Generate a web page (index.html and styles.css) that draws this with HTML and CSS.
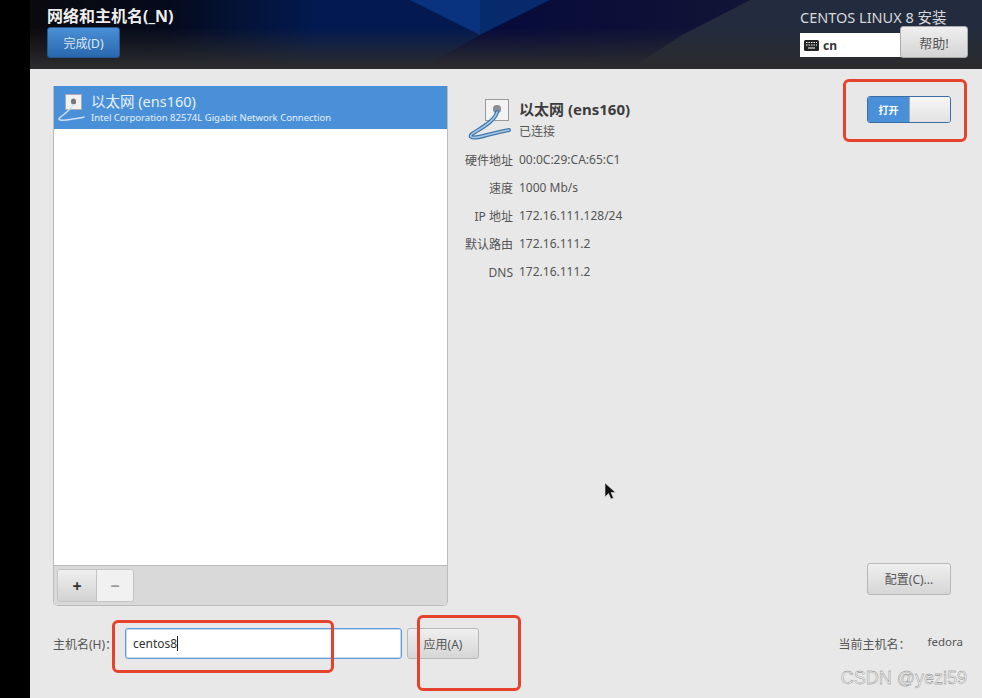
FILE: index.html
```html
<!DOCTYPE html>
<html lang="zh-CN">
<head>
    <meta name="viewport" content="width=device-width, initial-scale=1.0">
    <title>网络和主机名</title>
    <link rel="stylesheet" href="styles.css">
</head>
<body>
    <div class="screen">
        <div class="side-strip"></div>
        <div class="main">
            <header class="top-bar">
                <svg class="top-art" width="952" height="69" viewBox="30 0 952 69" preserveAspectRatio="none">
                    <defs>
                        <linearGradient id="baseFade" x1="0" x2="1" y1="0" y2="0">
                            <stop offset="0" stop-color="#0a0a0e"/>
                            <stop offset="0.14" stop-color="#050a1c"/>
                            <stop offset="0.3" stop-color="#021a50"/>
                            <stop offset="1" stop-color="#021a50"/>
                        </linearGradient>
                        <linearGradient id="darkFade" x1="0" x2="1" y1="0" y2="0">
                            <stop offset="0" stop-color="#03083c"/>
                            <stop offset="1" stop-color="#1a1d30"/>
                        </linearGradient>
                        <linearGradient id="bottomFade" x1="0" x2="0" y1="0" y2="1">
                            <stop offset="0.4" stop-color="#2b2b2d" stop-opacity="0"/>
                            <stop offset="0.96" stop-color="#2b2b2d"/>
                        </linearGradient>
                    </defs>
                    <rect x="30" y="0" width="952" height="69" fill="url(#baseFade)"/>
                    <polygon points="410,0 480,35 480,0" fill="#09327f"/>
                    <polygon points="480,0 480,35 550,0" fill="#072a6c"/>
                    <polygon points="550,0 480,35 420,69 982,69 982,0" fill="url(#darkFade)"/>
                    <polygon points="750,0 682,35 630,69 982,69 982,0" fill="#222c3e"/>
                    <rect x="30" y="0" width="952" height="69" fill="url(#bottomFade)"/>
                </svg>
                <div class="top-left">
                    <h1>网络和主机名(_N)</h1>
                    <button class="done-btn">完成(D)</button>
                </div>
                <div class="top-right">
                    <div class="product">CENTOS LINUX 8 安装</div>
                    <div class="top-controls">
                        <div class="keyboard">
                            <svg class="kb-icon" width="15" height="11" viewBox="0 0 15 11">
                                <rect width="15" height="11" rx="1.5" fill="#222"/>
                                <path d="M2 2.5h1.5M4.5 2.5H6M7 2.5h1.5M9.500 2.500H11M12 2.500h1M2 5h1.500M4.500 5H6M7 5h1.500M9.500 5H11M12 5h1M4 8h7" stroke="#fff" stroke-width="1.200"/>
                            </svg>
                            <span>cn</span>
                        </div>
                        <button class="help-btn">帮助!</button>
                    </div>
                </div>
            </header>
            <div class="content">
                <div class="columns">
                    <div class="list-col">
                        <div class="device-panel">
                            <div class="device-list">
                                <div class="device-row">
                                    <svg class="row-icon" width="28" height="30" viewBox="0 0 28 30">
                                        <rect x="8.500" y="1.500" width="16" height="15" fill="#f1f1f1" stroke="#aab" stroke-width="1"/>
                                        <rect x="14" y="5.500" width="5" height="6" rx="2.500" fill="#777"/>
                                        <path d="M16.500 11C14 17 8 20 2.500 25 0 28 8 27.500 13 26.500 18 25.500 24 25 27.500 24" fill="none" stroke="#cfe0f3" stroke-width="1.500"/>
                                    </svg>
                                    <div class="row-text">
                                        <div class="row-title">以太网 (ens160)</div>
                                        <div class="row-sub">Intel Corporation 82574L Gigabit Network Connection</div>
                                    </div>
                                </div>
                            </div>
                            <div class="list-toolbar">
                                <div class="add-remove">
                                    <span class="tool-btn add">+</span>
                                    <span class="tool-btn remove">−</span>
                                </div>
                            </div>
                        </div>
                    </div>
                    <div class="detail-col">
                        <div class="detail-head">
                            <svg class="detail-icon" width="48" height="44" viewBox="0 0 48 44">
                                <rect x="18.500" y="1.500" width="23" height="21" fill="#f3f3f3" stroke="#9a9a9a"/>
                                <rect x="26" y="7" width="8" height="8" rx="3.500" fill="#8a8f96"/>
                                <path d="M30 14C28 23 14 30 5 36 0 41 10 40 20 37 28 35 36 33 42 32" fill="none" stroke="#3f78ad" stroke-width="4" stroke-linecap="round"/>
                                <path d="M30 14C28 23 14 30 5 36 0 41 10 40 20 37 28 35 36 33 42 32" fill="none" stroke="#a9c8e6" stroke-width="1.500" stroke-linecap="round"/>
                            </svg>
                            <div>
                                <div class="detail-title">以太网 (ens160)</div>
                                <div class="detail-status">已连接</div>
                            </div>
                        </div>
                        <dl class="detail-table">
                            <dt>硬件地址</dt><dd>00:0C:29:CA:65:C1</dd>
                            <dt>速度</dt><dd>1000 Mb/s</dd>
                            <dt>IP 地址</dt><dd>172.16.111.128/24</dd>
                            <dt>默认路由</dt><dd>172.16.111.2</dd>
                            <dt>DNS</dt><dd>172.16.111.2</dd>
                        </dl>
                    </div>
                    <div class="action-col">
                        <div class="switch">
                            <span class="switch-on">打开</span>
                            <span class="switch-knob"></span>
                        </div>
                        <button class="gray-btn config-btn">配置(C)...</button>
                    </div>
                </div>
                <div class="host-row">
                    <label class="host-label">主机名(H)：</label>
                    <div class="host-input">centos8<span class="caret"></span></div>
                    <button class="gray-btn apply-btn">应用(A)</button>
                    <div class="current-host">
                        <span>当前主机名：</span>
                        <span class="host-value">fedora</span>
                    </div>
                </div>
            </div>
        </div>
    </div>

    <!-- annotations drawn on the screenshot -->
    <div class="mark mark-switch"></div>
    <div class="mark mark-input"></div>
    <div class="mark mark-apply"></div>
    <svg class="cursor" width="13" height="19" viewBox="0 0 13 19">
        <path d="M1 1v14l3.500-3.500 2.500 5.500 2.500-1-2.500-5.500h4.500z" fill="#111" stroke="#ddd" stroke-width=".6"/>
    </svg>
    <div class="watermark">CSDN @yezi59</div>
</body>
</html>
```

FILE: styles.css
```css
* {
    box-sizing: border-box;
}
body {
    margin: 0;
    width: 982px;
    height: 698px;
    overflow: hidden;
    position: relative;
    font-family: "Noto Sans", "Noto Sans CJK SC", sans-serif;
    font-size: 12px;
    color: #555;
    background: #e8e8e8;
}
button {
    font-family: inherit;
    margin: 0;
}
.screen {
    display: flex;
    height: 698px;
}
.side-strip {
    width: 30px;
    background: #000;
}
.main {
    flex: 1;
    display: flex;
    flex-direction: column;
    min-width: 0;
}

/* header */
.top-bar {
    height: 69px;
    position: relative;
    display: flex;
    justify-content: space-between;
    padding: 0 14px 0 17px;
    background: #2b2b2d;
    border-bottom: 1px solid #666;
}
.top-art {
    position: absolute;
    left: 0;
    top: 0;
}
.top-left,
.top-right {
    position: relative;
}
.top-left h1 {
    margin: 6px 0 0;
    font-size: 16px;
    line-height: 20px;
    font-weight: bold;
    color: #eee;
}
.done-btn {
    display: block;
    margin-top: 1px;
    width: 73px;
    height: 31px;
    font-size: 12px;
    color: #dfe8f3;
    border: 1px solid #24558c;
    border-radius: 3px;
    background: linear-gradient(180deg, #4a8fd6, #2a68ae);
}
.top-right {
    width: 168px;
}
.product {
    margin-top: 8px;
    font-size: 14.500px;
    line-height: 18px;
    white-space: nowrap;
    color: #d8d8d8;
}
.top-controls {
    display: flex;
    align-items: flex-start;
}
.keyboard {
    width: 101px;
    height: 24px;
    margin-top: 7px;
    margin-right: -1px;
    padding-left: 4px;
    display: flex;
    align-items: center;
    gap: 4px;
    background: #fff;
    font-size: 12px;
    font-weight: bold;
    color: #333;
}
.help-btn {
    width: 68px;
    height: 32px;
    font-size: 13px;
    color: #555;
    border: 1px solid #aaa;
    border-radius: 3px;
    background: linear-gradient(180deg, #efefef, #d4d4d4);
}

/* content */
.content {
    flex: 1;
    display: flex;
    flex-direction: column;
    padding: 17px 31px 0 23px;
}
.columns {
    display: flex;
    height: 520px;
}
.list-col {
    width: 395px;
}
.device-panel {
    height: 100%;
    display: flex;
    flex-direction: column;
    border: 1px solid #bbb;
    border-top: 0;
    border-radius: 0 0 5px 5px;
    background: #fff;
    overflow: hidden;
}
.device-list {
    flex: 1;
}
.device-row {
    height: 43px;
    display: flex;
    gap: 6px;
    align-items: center;
    padding: 0 0 0 3px;
    background: #4a90d9;
    color: #e6f0fa;
}
.row-title {
    font-size: 14.500px;
    line-height: 19px;
}
.row-sub {
    margin-top: 1px;
    font-size: 9.500px;
    line-height: 12px;
}
.list-toolbar {
    height: 40px;
    padding: 3px 3px;
    background: #d9d9d9;
    border-top: 1px solid #bbb;
}
.add-remove {
    display: flex;
    width: 77px;
    height: 33px;
    border: 1px solid #c4c4c4;
    border-radius: 3px;
    overflow: hidden;
}
.tool-btn {
    flex: 1;
    display: flex;
    align-items: center;
    justify-content: center;
    font-size: 16px;
    font-weight: bold;
}
.add {
    flex: 0 0 39px;
    color: #333;
    background: linear-gradient(180deg, #efefef, #d2d2d2);
    border-right: 1px solid #c4c4c4;
}
.remove {
    color: #999;
    background: #f1f1f1;
}

/* details */
.detail-col {
    width: 310px;
    padding: 12px 0 0 23px;
}
.detail-head {
    display: flex;
    gap: 4px;
    margin-left: -4px;
}
.detail-title {
    margin-top: 1px;
    font-size: 15px;
    line-height: 20px;
    font-weight: bold;
    color: #3c3c3c;
}
.detail-status {
    margin-top: 4px;
    font-size: 12px;
    line-height: 18px;
}
.detail-table {
    margin: 9px 0 0 -12px;
    display: grid;
    grid-template-columns: 54px 1fr;
    column-gap: 6px;
    grid-auto-rows: 28px;
    line-height: 18px;
}
.detail-table dt {
    text-align: right;
    white-space: nowrap;
    padding-top: 1px;
}
.detail-table dd {
    margin: 0;
    font-size: 12px;
}
.action-col {
    flex: 1;
    display: flex;
    flex-direction: column;
    align-items: flex-end;
    justify-content: space-between;
    padding: 10px 0 11px;
}
.switch {
    width: 84px;
    height: 27px;
    display: flex;
    border: 1px solid #3b6ea5;
    border-radius: 3px;
    overflow: hidden;
    margin-right: 0;
}
.switch-on {
    width: 41px;
    display: flex;
    align-items: center;
    justify-content: center;
    font-size: 10px;
    font-weight: bold;
    color: #fff;
    background: #4a90d9;
}
.switch-knob {
    flex: 1;
    border-left: 1px solid #aaa;
    background: linear-gradient(180deg, #f6f6f6, #e2e2e2);
}
.gray-btn {
    font-size: 12px;
    color: #555;
    border: 1px solid #b8b8b8;
    border-radius: 3px;
    background: linear-gradient(180deg, #efefef, #d6d6d6);
}
.config-btn {
    width: 84px;
    height: 32px;
}

/* hostname row */
.host-row {
    display: flex;
    align-items: center;
    margin-top: 22px;
}
.host-label {
    width: 72px;
    white-space: nowrap;
}
.host-input {
    width: 277px;
    height: 31px;
    padding: 0 7px;
    display: flex;
    align-items: center;
    background: #fff;
    border: 1px solid #5b9bdd;
    border-radius: 3px;
    box-shadow: inset 0 0 0 1px rgba(91, 155, 221, 0.35);
    color: #333;
}
.caret {
    width: 1px;
    height: 15px;
    background: #222;
}
.apply-btn {
    width: 72px;
    height: 31px;
    margin-left: 5px;
}
.current-host {
    margin-left: auto;
    display: flex;
    gap: 17px;
    margin-right: -12px;
}
.host-value {
    font-size: 11.500px;
    margin-top: -1px;
}

/* annotations */
.mark {
    position: absolute;
    border: 3px solid #e5432d;
    border-radius: 6px;
}
.mark-switch {
    left: 843px;
    top: 79px;
    width: 124px;
    height: 63px;
}
.mark-input {
    left: 112px;
    top: 620px;
    width: 222px;
    height: 53px;
}
.mark-apply {
    left: 417px;
    top: 615px;
    width: 104px;
    height: 76px;
}
.cursor {
    position: absolute;
    left: 604px;
    top: 482px;
}
.watermark {
    position: absolute;
    right: 15px;
    top: 667px;
    font-family: "Liberation Sans", sans-serif;
    font-size: 18px;
    line-height: 22px;
    color: #eee;
    -webkit-text-stroke: 0.35px #777;
}
```
